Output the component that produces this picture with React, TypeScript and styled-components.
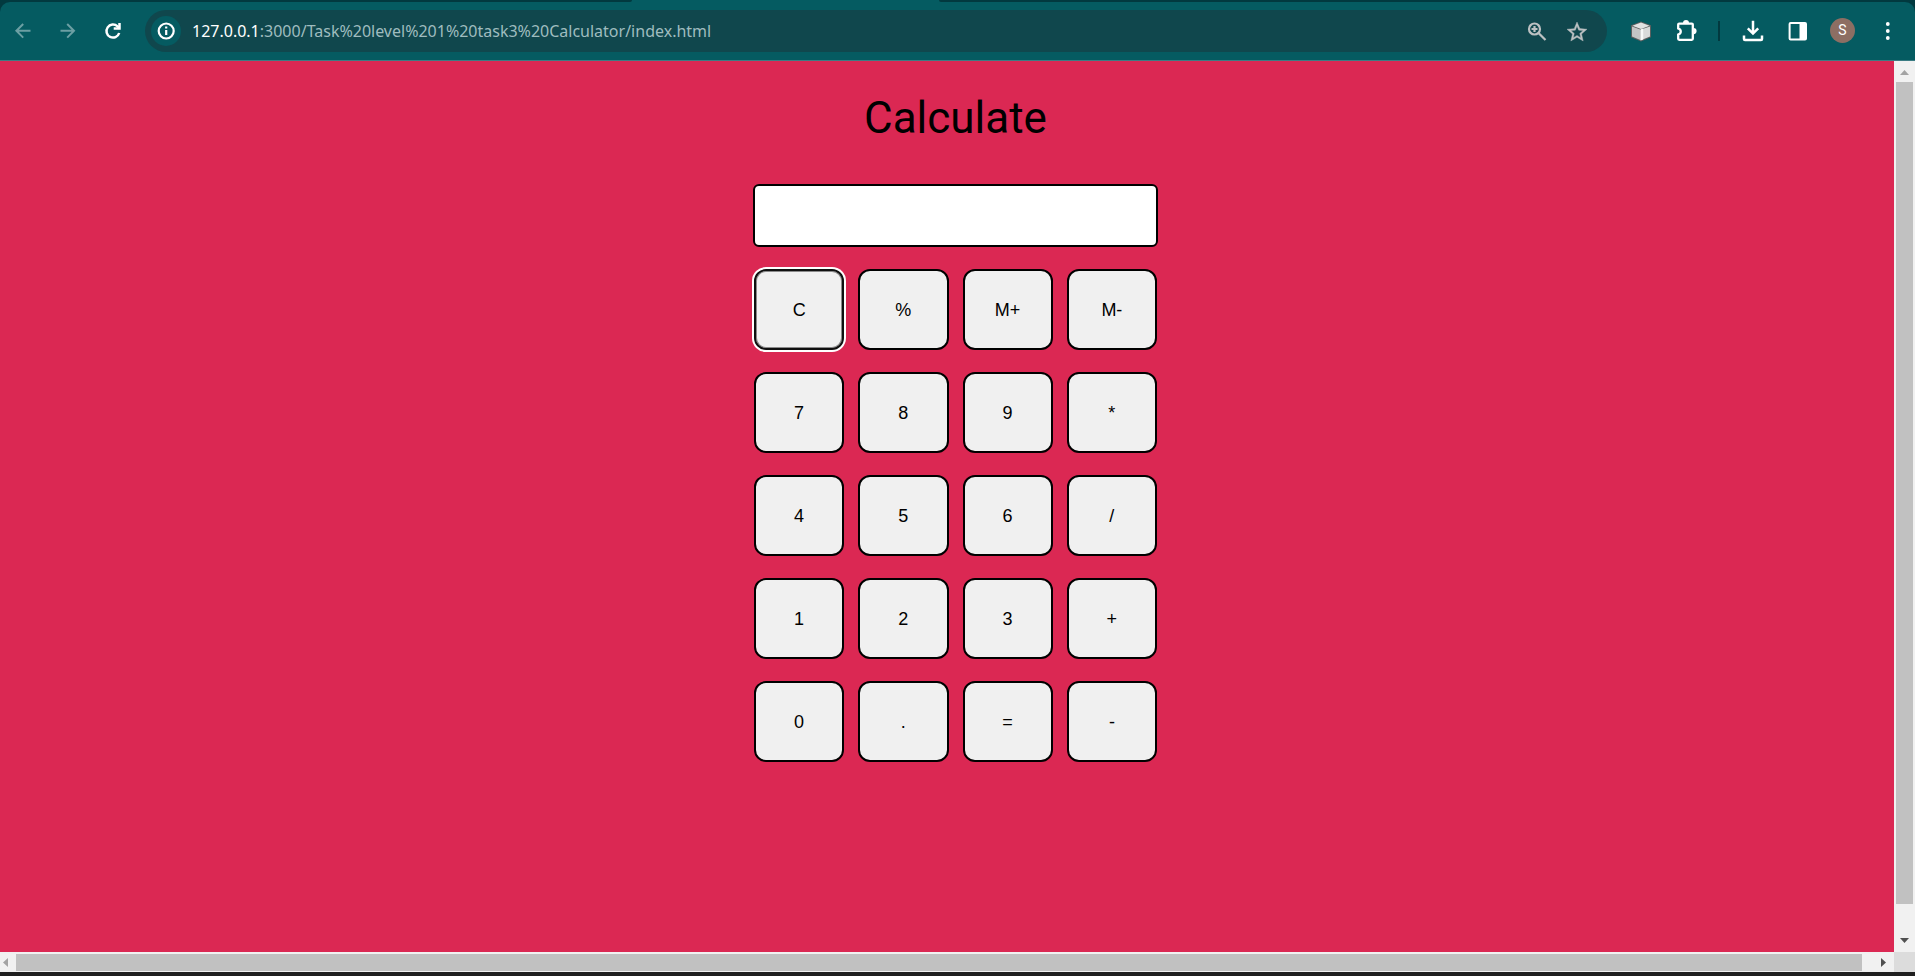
import React, { useState } from "react";
import styled, { createGlobalStyle } from "styled-components";

const GlobalStyle = createGlobalStyle`
  *, *::before, *::after { box-sizing: border-box; }
  body { margin: 0; background: #1f1f1f; }
`;

const Browser = styled.div`
  display: flex;
  flex-direction: column;
  height: 100vh;
  padding-bottom: 4px;
`;

const TabStrip = styled.div`
  display: flex;
  flex: none;
  height: 2px;
  background: #055b61;
`;

const InactiveTabs = styled.div<{ $share: number; $side: "left" | "right" }>`
  flex: ${(p) => p.$share} 1 0;
  background: #02393f;
  border-radius: ${(p) => (p.$side === "left" ? "0 0 8px 0" : "0 0 0 8px")};
`;

const ActiveTab = styled.div`
  flex: 307 1 0;
`;

const ToolbarFrame = styled.div`
  flex: none;
  background: #02393f;
`;

const Toolbar = styled.header`
  display: flex;
  align-items: center;
  height: 59px;
  padding: 0 5px 1px 0;
  background: #055b61;
  border-bottom: 1px solid #3b7c83;
  border-radius: 10px 10px 0 0;
`;

const ToolButton = styled.button<{ $dim?: boolean; $width?: number }>`
  display: flex;
  flex: none;
  align-items: center;
  justify-content: center;
  width: ${(p) => p.$width ?? 45}px;
  height: 42px;
  padding: 0;
  border: 0;
  background: transparent;
  color: ${(p) => (p.$dim ? "#6c9fa3" : "#ffffff")};
`;

const Icon = styled.svg`
  display: block;
  width: 24px;
  height: 24px;
`;

const AddressBar = styled.div`
  display: flex;
  flex: 1;
  align-items: center;
  min-width: 0;
  height: 42px;
  margin: 0 11px 0 10px;
  padding: 0 10px 0 6px;
  border-radius: 21px;
  background: #10474d;
`;

const SiteInfo = styled.button`
  display: flex;
  flex: none;
  align-items: center;
  justify-content: center;
  width: 30px;
  height: 30px;
  padding: 0;
  border: 0;
  border-radius: 50%;
  background: #055b61;
  color: #ffffff;
`;

const Url = styled.a`
  flex: 1;
  min-width: 0;
  margin-left: 11px;
  overflow: hidden;
  color: #9fbcbf;
  font: 16px/24px "Noto Sans", "Open Sans", sans-serif;
  text-decoration: none;
  white-space: nowrap;
`;

const Host = styled.span`
  color: #ffffff;
`;

const AddressAction = styled(ToolButton)`
  color: #bcc1c2;
`;

const Separator = styled.div`
  flex: none;
  width: 2px;
  height: 20px;
  margin: 0 10px;
  background: #02393f;
`;

const Avatar = styled.span`
  width: 25px;
  height: 25px;
  border-radius: 50%;
  background: #8d6e63;
  color: #ffffff;
  font: 14px/25px Roboto, sans-serif;
  text-align: center;
`;

const Viewport = styled.div`
  display: grid;
  flex: 1;
  grid-template: minmax(0, 1fr) 20px / minmax(0, 1fr) 21px;
  min-height: 0;
`;

const Page = styled.main`
  overflow: hidden;
  background: #db2853;
`;

/* The page content is a little wider than the visible area. */
const Content = styled.div`
  display: flex;
  flex-direction: column;
  align-items: center;
  width: calc(100% + 17px);
`;

const Title = styled.h1`
  margin: 30px 0 0;
  color: #000000;
  font: 400 44px/54px Roboto, sans-serif;
`;

const Calculator = styled.section`
  width: 405px;
  margin-top: 39px;
`;

const Display = styled.input`
  display: block;
  width: 100%;
  height: 63px;
  padding: 0 12px;
  border: 2px solid #000000;
  border-radius: 6px;
  background: #ffffff;
  font: 24px/32px "Liberation Sans", Arial, sans-serif;
  outline: none;
`;

const Keypad = styled.div`
  display: grid;
  grid-template-columns: repeat(4, 1fr);
  gap: 22px 14px;
  padding: 22px 1px 0;
`;

const Key = styled.button<{ $focused: boolean }>`
  height: 81px;
  padding: 0;
  border: 2px solid ${(p) => (p.$focused ? "#101010" : "#000000")};
  border-radius: 12px;
  background: #f0f0f0;
  box-shadow: ${(p) => (p.$focused ? "0 0 0 2px #ffffff, inset 0 0 0 1px #8a8a8a" : "none")};
  color: #000000;
  font: 18px/20px "Liberation Sans", Arial, sans-serif;
  outline: none;
`;

const ScrollTrack = styled.div<{ $vertical?: boolean }>`
  display: flex;
  flex-direction: ${(p) => (p.$vertical ? "column" : "row")};
  align-items: center;
  background: #f1f1f1;
`;

const ScrollArrow = styled.svg<{ $long: number; $vertical?: boolean }>`
  flex: none;
  width: ${(p) => (p.$vertical ? 21 : p.$long)}px;
  height: ${(p) => (p.$vertical ? p.$long : 20)}px;
`;

const ScrollThumb = styled.div<{ $share: number; $vertical?: boolean }>`
  flex: ${(p) => p.$share} 1 0;
  width: ${(p) => (p.$vertical ? "17px" : "auto")};
  height: ${(p) => (p.$vertical ? "auto" : "17px")};
  background: #c1c1c1;
`;

const ScrollRest = styled.div<{ $share: number }>`
  flex: ${(p) => p.$share} 1 0;
`;

const Corner = styled.div`
  background: #dcdcdc;
`;

const keys = [
  "C", "%", "M+", "M-",
  "7", "8", "9", "*",
  "4", "5", "6", "/",
  "1", "2", "3", "+",
  "0", ".", "=", "-",
];

function calculate(expression: string): string {
  const tokens = expression.match(/\d*\.?\d+|[-+*/%]/g) ?? [];
  const values: number[] = [];
  let operator = "+";
  for (const token of tokens) {
    if (/^[-+*/%]$/.test(token)) {
      operator = token;
      continue;
    }
    const n = Number(token);
    if (operator === "+") values.push(n);
    else if (operator === "-") values.push(-n);
    else {
      const last = values.pop() ?? 0;
      values.push(operator === "*" ? last * n : operator === "/" ? last / n : last % n);
    }
  }
  return String(values.reduce((sum, n) => sum + n, 0));
}

export default function App() {
  const [value, setValue] = useState("");
  const [focused, setFocused] = useState("C");
  const [memory, setMemory] = useState(0);

  const press = (key: string) => {
    setFocused(key);
    if (key === "C") setValue("");
    else if (key === "=") setValue(calculate(value));
    else if (key === "M+") setMemory(memory + Number(calculate(value)));
    else if (key === "M-") setMemory(memory - Number(calculate(value)));
    else setValue(value + key);
  };

  return (
    <Browser>
      <GlobalStyle />
      <TabStrip>
        <InactiveTabs $share={632} $side="left" />
        <ActiveTab />
        <InactiveTabs $share={976} $side="right" />
      </TabStrip>
      <ToolbarFrame>
        <Toolbar>
          <ToolButton $dim aria-label="Back">
            <Icon viewBox="0 0 24 24" fill="none" stroke="currentColor" strokeWidth="2">
              <path d="M19.500 11.800H6M12.200 5l-6.800 6.800 6.800 6.800" />
            </Icon>
          </ToolButton>
          <ToolButton $dim aria-label="Forward">
            <Icon viewBox="0 0 24 24" fill="none" stroke="currentColor" strokeWidth="2">
              <path d="M4.500 11.800H18M11.200 5l6.800 6.800-6.800 6.800" />
            </Icon>
          </ToolButton>
          <ToolButton aria-label="Reload">
            <Icon viewBox="0 0 24 24" fill="none" stroke="currentColor" strokeWidth="2.500">
              <path d="M18.200 14a6.500 6.500 0 1 1-1.700-6.600l1.900 1.900" />
              <path d="M18.500 4v5.500h-5.800" />
            </Icon>
          </ToolButton>
          <AddressBar>
            <SiteInfo aria-label="Site information">
              <Icon viewBox="0 0 24 24" fill="none" stroke="currentColor" strokeWidth="2.200">
                <circle cx="12.200" cy="12" r="7.500" />
                <path d="M12.200 11v5M12.200 7.600v2" />
              </Icon>
            </SiteInfo>
            <Url href="#">
              <Host>127.0.0.1</Host>:3000/Task%20level%201%20task3%20Calculator/index.html
            </Url>
            <AddressAction $width={40} aria-label="Zoom">
              <Icon viewBox="0 0 24 24" fill="none" stroke="currentColor" strokeWidth="2.200">
                <circle cx="9.500" cy="10" r="5.500" />
                <path d="M13.500 14l7 7M6.500 10h6M9.500 7v6" />
              </Icon>
            </AddressAction>
            <AddressAction $width={40} aria-label="Bookmark this tab">
              <Icon viewBox="0 -1 24 24" fill="currentColor" stroke="currentColor" strokeWidth="0.400">
                <path d="M22 9.240l-7.190-.62L12 2 9.190 8.630 2 9.240l5.460 4.730L5.820 21 12 17.270 18.180 21l-1.630-7.030L22 9.240zM12 15.400l-3.760 2.270 1-4.280-3.320-2.880 4.380-.38L12 6.100l1.710 4.040 4.380.38-3.320 2.880 1 4.280L12 15.400z" />
              </Icon>
            </AddressAction>
          </AddressBar>
          <ToolButton aria-label="3D viewer extension">
            <Icon viewBox="0 0 24 24">
              <path d="M12 2.600l10 3.600v12L12 22.400 2 18.200v-12z" fill="#5c5f5f" />
              <path d="M12 3.500l8.600 3.200L12 10 3.400 6.700z" fill="#e2e2e2" />
              <path d="M3 7.400l8.900 3.400v10.400L3 17.600z" fill="#c4c4c4" />
              <path d="M11.900 10.600L21 7.400v10.200l-9.100 3.700z" fill="#dadada" />
              <path d="M11.600 10.600l2.600-1v10.800l-2.600 1z" fill="#f8f8f8" />
            </Icon>
          </ToolButton>
          <ToolButton aria-label="Extensions">
            <Icon viewBox="0 0 24 24">
              <path
                d="M5.200 4.600h12.600a1 1 0 0 1 1 1V19.800a1 1 0 0 1-1 1H5.200a1 1 0 0 1-1-1v-4.200c3.400-1.200 3.400-5 0-6.200V5.600a1 1 0 0 1 1-1z"
                fill="none"
                stroke="currentColor"
                strokeWidth="2.300"
              />
              <path d="M9 4a3 3 0 0 1 6 0zM19.500 9a3 3 0 0 1 0 6.200z" fill="currentColor" />
            </Icon>
          </ToolButton>
          <Separator />
          <ToolButton aria-label="Downloads">
            <Icon viewBox="0 0 24 24" fill="none" stroke="currentColor" strokeWidth="2.500">
              <path d="M12 1.800v13M6.800 9.400l5.200 5.200 5.200-5.200M3 16.500v3.500a1 1 0 0 0 1 1h16a1 1 0 0 0 1-1v-3.500" />
            </Icon>
          </ToolButton>
          <ToolButton aria-label="Side panel">
            <Icon viewBox="0 0 24 24">
              <rect x="3.600" y="4" width="16.400" height="16.600" rx="1" fill="none" stroke="currentColor" strokeWidth="2" />
              <path d="M13.500 4h6.500v16.600h-6.500z" fill="currentColor" />
            </Icon>
          </ToolButton>
          <ToolButton aria-label="Profile">
            <Avatar>S</Avatar>
          </ToolButton>
          <ToolButton aria-label="Menu">
            <Icon viewBox="0 0 24 24" fill="currentColor">
              <circle cx="11.800" cy="5" r="1.900" />
              <circle cx="11.800" cy="12" r="1.900" />
              <circle cx="11.800" cy="19" r="1.900" />
            </Icon>
          </ToolButton>
        </Toolbar>
      </ToolbarFrame>
      <Viewport>
        <Page>
          <Content>
            <Title>Calculate</Title>
            <Calculator aria-label="Calculator">
              <Display aria-label="Result" value={value} onChange={(e) => setValue(e.target.value)} />
              <Keypad>
                {keys.map((key) => (
                  <Key key={key} $focused={focused === key} onClick={() => press(key)}>
                    {key}
                  </Key>
                ))}
              </Keypad>
            </Calculator>
          </Content>
        </Page>
        <ScrollTrack $vertical>
          <ScrollArrow $vertical $long={21} viewBox="0 0 21 21" fill="#a3a3a3">
            <path d="M6 14l4.500-5 4.500 5z" />
          </ScrollArrow>
          <ScrollThumb $vertical $share={822} />
          <ScrollRest $share={27} />
          <ScrollArrow $vertical $long={21} viewBox="0 0 21 21" fill="#505050">
            <path d="M6 7l4.500 5 4.500-5z" />
          </ScrollArrow>
        </ScrollTrack>
        <ScrollTrack>
          <ScrollArrow $long={16} viewBox="0 0 16 20" fill="#a3a3a3">
            <path d="M8 6l-5 4.500 5 4.500z" />
          </ScrollArrow>
          <ScrollThumb $share={1846} />
          <ScrollRest $share={11} />
          <ScrollArrow $long={21} viewBox="0 0 21 20" fill="#505050">
            <path d="M8 6l5 4.500-5 4.500z" />
          </ScrollArrow>
        </ScrollTrack>
        <Corner />
      </Viewport>
    </Browser>
  );
}
